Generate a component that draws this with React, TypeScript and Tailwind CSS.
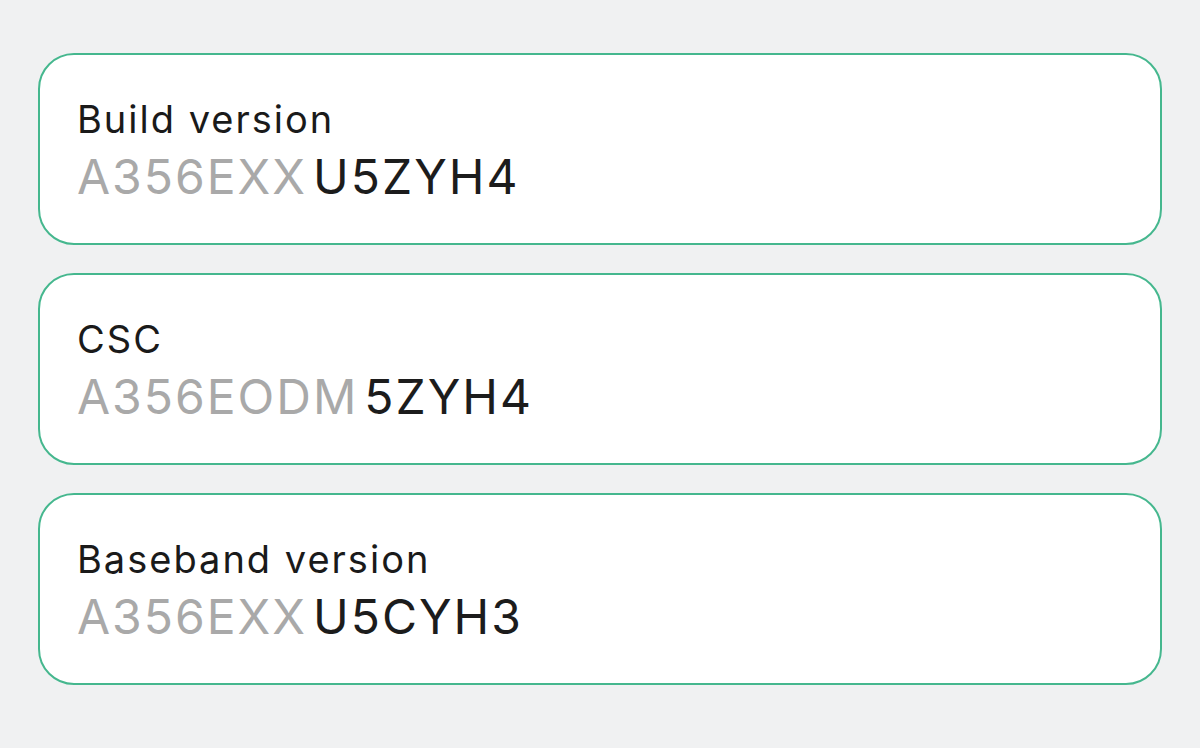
import React from "react";

const rows = [
  { label: "Build version", prefix: "A356EXX", rest: "U5ZYH4" },
  { label: "CSC", prefix: "A356EODM", rest: "5ZYH4" },
  { label: "Baseband version", prefix: "A356EXX", rest: "U5CYH3" },
];

const App = () => {
  return (
    <div className="w-[1200px] h-[748px] bg-[#f0f1f2] px-[38px] pt-[53px] flex flex-col gap-[28px] font-['Inter',sans-serif] overflow-hidden">
      {rows.map((row) => (
        <div
          key={row.label}
          className="h-[192px] bg-white border-2 border-[#45b78e] rounded-[36px] px-[37px] pt-[4px] flex flex-col justify-center"
        >
          <p className="text-[38px] leading-[44px] text-[#1a1a1a] tracking-[2px]">{row.label}</p>
          <p className="text-[48px] leading-[56px] tracking-[2px] mt-[8px]">
            <span className="text-[#a9a9a9]">{row.prefix}</span>
            <span className="text-[#1c1c1c] ml-[6px]">{row.rest}</span>
          </p>
        </div>
      ))}
    </div>
  );
};

export default App;
